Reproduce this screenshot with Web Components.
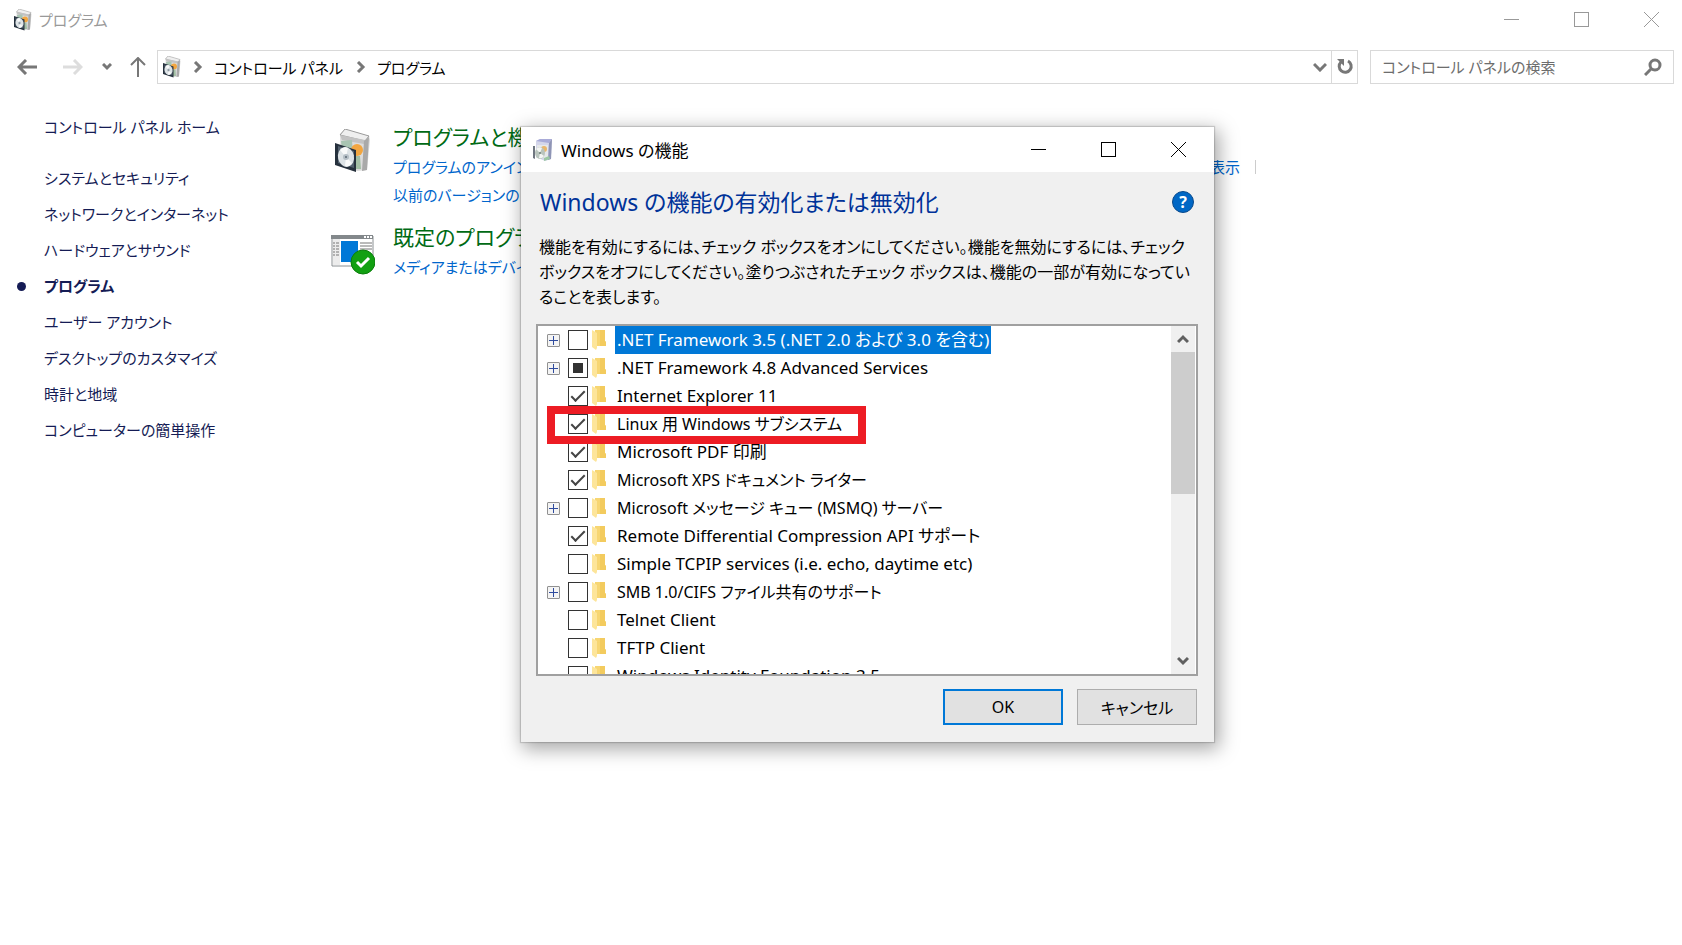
<!DOCTYPE html>
<html lang="ja">
<head>
<meta charset="utf-8">
<title>プログラム</title>
<style>
  body {
    margin: 0;
    background: #fff;
    color: #000;
    font-family: "Noto Sans", "Noto Sans CJK JP", sans-serif;
    font-size: 15px;
    font-feature-settings: "palt";
  }
</style>
</head>
<body>
<control-panel></control-panel>

<script>
const programIcon = `
  <svg viewBox="0 0 36 44" width="100%" height="100%">
    <path d="M5 5 10 0 34 7 35 11 32 41 22 42 6 36z" fill="#dcdcdc"/>
    <path d="M5 6 10 0 34 7 30 12z" fill="#efefef" stroke="#9b9b9b"/>
    <path d="M5 6 7 11 29 15 30 11z" fill="#c2c2c2"/>
    <path d="M29 12 34 8 32 41 27 42z" fill="#a9a9a9"/>
    <path d="M6 12 17 11 18 28 8 30z" fill="#a8c4b2"/>
    <circle cx="22" cy="21" r="6" fill="#f2a640"/>
    <path d="M20 27 25 27 26 40 20 40z" fill="#a3bfa5"/>
    <path d="M0 14 21 21V43L0 36z" fill="#26313d"/>
    <path d="M3 17 19 22V39L3 34z" fill="#53616f"/>
    <ellipse cx="11" cy="28" rx="8" ry="10" fill="#dde3e6" transform="rotate(-12 11 28)"/>
    <path d="M11 28 5 21Q8 17 13 19zM11 28 17 34Q15 38 10 37z" fill="#f9fafa"/>
    <circle cx="11" cy="28" r="3" fill="#b4bec5"/>
    <circle cx="11" cy="28" r="1" fill="#5d6a74"/>
  </svg>`;

const defaultsIcon = `
  <svg viewBox="0 0 44 40" width="100%" height="100%">
    <path d="M1 1H42V31H1z" fill="#fff" stroke="#8a8f92" stroke-width="1"/>
    <path d="M0 0H42V4H0z" fill="#83888b"/>
    <path d="M33 1h2v2h-2zM36 1h2v2h-2zM39 1h2v2h-2z" fill="#fff"/>
    <path d="M2 4H9V30H2z" fill="#ececec"/>
    <path d="M2 8h2m1 0h3M2 11h2m1 0h3M2 14h2m1 0h3M2 17h2m1 0h3M2 20h2m1 0h3M29 8H41M29 11H41M29 14H41" stroke="#777" stroke-width="1"/>
    <path d="M10 6H27V27H10z" fill="#0078d7"/>
    <circle cx="32" cy="27" r="12" fill="#12a012" stroke="#0b7d0b"/>
    <path d="M26 27 30 31 38 23" fill="none" stroke="#fff" stroke-width="3"/>
  </svg>`;

const featuresIcon = `
  <svg viewBox="0 0 22 24" width="100%" height="100%">
    <path d="M4 3 8 1H20L19 21 13 23 4 19z" fill="#d4d6ea"/>
    <path d="M4 3 8 1H20L17 5z" fill="#a9abd8"/>
    <path d="M17 5 20 1 19 21 16 22z" fill="#8f95b5"/>
    <path d="M5 7H16V20H5z" fill="#e6e8ea"/>
    <circle cx="12" cy="11" r="3" fill="#eab66b"/>
    <path d="M1 8 3 8 3 21 1 20z" fill="#6f7680"/>
    <ellipse cx="8" cy="15" rx="5" ry="6" fill="#b9c4bd"/>
    <path d="M8 15 4 11Q7 8 10 10zM8 15 12 18Q10 21 7 20z" fill="#f4f6f4"/>
    <circle cx="8" cy="15" r="1" fill="#6b7c74"/>
    <path d="M12 20 17 18 18 21 12 23z" fill="#9cc8a4"/>
  </svg>`;

// Minimize, maximize and close buttons
class CaptionButtons extends HTMLElement {
  constructor() {
    super();
    this.attachShadow({ mode: 'open' });
    this.shadowRoot.innerHTML = `
      <style>
        :host { display: flex; align-self: stretch; }
        button {
          display: flex;
          align-items: center;
          justify-content: center;
          width: 70px;
          padding: 0;
          border: 0;
          background: none;
          color: inherit;
        }
        svg { fill: none; stroke: currentColor; shape-rendering: crispEdges; }
        .x { shape-rendering: auto; }
      </style>
      <button aria-label="最小化"><svg width="15" height="15"><path d="M0 7.5H15"/></svg></button>
      <button aria-label="最大化"><svg width="15" height="15"><path d="M.5 .5H14.5V14.5H.5z"/></svg></button>
      <button aria-label="閉じる"><svg class="x" width="15" height="15"><path d="M0 0 15 15M15 0 0 15"/></svg></button>
    `;
  }
}
customElements.define('caption-buttons', CaptionButtons);

class AddressBar extends HTMLElement {
  constructor() {
    super();
    this.attachShadow({ mode: 'open' });
    this.shadowRoot.innerHTML = `
      <style>
        :host { display: flex; align-items: center; height: 34px; padding: 0 8px 0 15px; }
        button {
          display: flex;
          align-items: center;
          justify-content: center;
          flex: none;
          height: 32px;
          padding: 0;
          border: 0;
          background: none;
        }
        svg { fill: none; stroke: #777; stroke-width: 2; }
        .back, .forward { width: 24px; margin-right: 22px; }
        .forward { margin-right: 14px; }
        .recent { width: 16px; margin-right: 13px; }
        .up { width: 20px; margin-right: 9px; }
        .forward svg { stroke: #ddd; }
        .path, .search {
          box-sizing: border-box;
          display: flex;
          align-items: center;
          height: 34px;
          border: 1px solid #d9d9d9;
        }
        .path { flex: 1; margin-right: 12px; }
        .icon { width: 18px; height: 22px; margin: 0 12px 0 5px; }
        .icon svg { stroke: none; stroke-width: 1; }
        .crumb { color: #000; text-decoration: none; margin: 0 13px 0 11px; }
        .drop { width: 22px; margin-left: auto; }
        .refresh { width: 26px; border-left: 1px solid #d9d9d9; }
        .search { width: 304px; }
        input {
          flex: 1;
          min-width: 0;
          padding: 0 0 0 11px;
          border: 0;
          outline: 0;
          background: none;
          font: inherit;
          font-feature-settings: inherit;
        }
        input::placeholder { color: #6d6d6d; opacity: 1; }
        .find { width: 40px; }
      </style>
      <button class="back" aria-label="戻る"><svg width="20" height="16"><path d="M9 1 2 8 9 15M2 8H20" stroke-width="3"/></svg></button>
      <button class="forward" aria-label="進む"><svg width="20" height="16"><path d="M11 1 18 8 11 15M18 8H0" stroke-width="3"/></svg></button>
      <button class="recent" aria-label="最近表示した場所"><svg width="10" height="8"><path d="M1 1 5 5 9 1" stroke-width="3"/></svg></button>
      <button class="up" aria-label="上へ"><svg width="16" height="20"><path d="M1 8 8 1 15 8M8 1V20"/></svg></button>
      <div class="path">
        <span class="icon">${programIcon}</span>
        <svg width="10" height="12"><path d="M2 1 7 6 2 11" stroke-width="3"/></svg>
        <a class="crumb" href="#">コントロール パネル</a>
        <svg width="10" height="12"><path d="M2 1 7 6 2 11" stroke-width="3"/></svg>
        <a class="crumb" href="#">プログラム</a>
        <button class="drop" aria-label="以前の場所"><svg width="14" height="10"><path d="M1 2 7 8 13 2" stroke-width="3"/></svg></button>
        <button class="refresh" aria-label="最新の情報に更新">
          <svg width="18" height="18"><path d="M12 3A6 6 0 1 1 5 4" stroke-width="3"/><path d="M1 1H8V8z" fill="#777" stroke="none"/></svg>
        </button>
      </div>
      <div class="search">
        <input type="text" aria-label="コントロール パネルの検索" placeholder="コントロール パネルの検索">
        <button class="find" aria-label="検索"><svg width="18" height="18"><circle cx="11" cy="7" r="5" stroke-width="3"/><path d="M8 10 1 17" stroke-width="3"/></svg></button>
      </div>
    `;
  }
}
customElements.define('address-bar', AddressBar);

class SideNav extends HTMLElement {
  constructor() {
    super();
    this.attachShadow({ mode: 'open' });
    const items = [
      'システムとセキュリティ',
      'ネットワークとインターネット',
      'ハードウェアとサウンド',
      'プログラム',
      'ユーザー アカウント',
      'デスクトップのカスタマイズ',
      '時計と地域',
      'コンピューターの簡単操作',
    ];
    this.shadowRoot.innerHTML = `
      <style>
        :host { display: block; line-height: 36px; }
        a { color: #151c55; text-decoration: none; }
        .home { display: block; margin: 0 0 15px 44px; }
        ul { margin: 0; padding: 0; list-style: none; }
        li { display: flex; align-items: center; padding-left: 44px; }
        .current { padding-left: 17px; gap: 18px; font-weight: 600; }
        .current::before {
          content: "";
          width: 9px;
          height: 9px;
          border-radius: 50%;
          background: #151c55;
        }
      </style>
      <a class="home" href="#">コントロール パネル ホーム</a>
      <ul>
        ${items.map(item => `<li class="${item === 'プログラム' ? 'current' : ''}"><a href="#">${item}</a></li>`).join('')}
      </ul>
    `;
  }
}
customElements.define('side-nav', SideNav);

// A category: icon, green heading and its task links (slotted)
class PanelCategory extends HTMLElement {
  constructor() {
    super();
    this.attachShadow({ mode: 'open' });
  }

  connectedCallback() {
    const icon = this.getAttribute('icon') === 'defaults' ? defaultsIcon : programIcon;
    this.shadowRoot.innerHTML = `
      <style>
        :host { display: flex; gap: 18px; }
        .icon { flex: none; display: flex; justify-content: center; width: 44px; height: 44px; margin-top: 8px; }
        :host([icon]) .icon { margin-top: 12px; }
        .body { flex: 1; }
        h2 { margin: 0; font-size: 21px; font-weight: 400; line-height: 32px; }
        h2 a { color: #006a14; text-decoration: none; }
      </style>
      <span class="icon">${icon}</span>
      <div class="body">
        <h2><a href="#">${this.getAttribute('heading')}</a></h2>
        <slot></slot>
      </div>
    `;
  }
}
customElements.define('panel-category', PanelCategory);

class FeatureItem extends HTMLElement {
  constructor() {
    super();
    this.attachShadow({ mode: 'open' });
  }

  connectedCallback() {
    this.shadowRoot.innerHTML = `
      <style>
        :host { position: relative; display: flex; align-items: center; height: 28px; padding-left: 9px; font-size: 17px; }
        :host([kana]) { font-size: 16px; }
        .toggle {
          flex: none;
          display: flex;
          width: 13px;
          height: 13px;
          padding: 0;
          border: 1px solid #919191;
          border-radius: 1px;
          background: #f4f4f4;
        }
        .toggle svg { stroke: #2f4b9e; }
        .none { visibility: hidden; }
        input {
          flex: none;
          appearance: none;
          display: grid;
          place-items: center;
          width: 20px;
          height: 20px;
          margin: 0 4px 0 8px;
          border: 1px solid #333;
          background: #fff;
        }
        input:checked::before {
          content: "";
          width: 12px;
          height: 5px;
          margin-top: -4px;
          border-left: 2px solid #444;
          border-bottom: 2px solid #444;
          transform: rotate(-45deg);
        }
        input:indeterminate::before {
          content: "";
          width: 10px;
          height: 10px;
          background: #333;
        }
        .folder { flex: none; margin-right: 9px; }
        label { padding: 0 2px; line-height: 28px; white-space: nowrap; }
        :host([selected]) label { background: #0078d7; color: #fff; }
        :host([marked])::after {
          content: "";
          position: absolute;
          z-index: 1;
          left: 9px;
          top: -4px;
          box-sizing: border-box;
          width: 319px;
          height: 38px;
          border: 8px solid #ed1c24;
        }
      </style>
      <button class="toggle ${this.hasAttribute('branch') ? '' : 'none'}" aria-label="展開"><svg width="11" height="11"><path d="M1 5.5H10M5.5 1V10"/></svg></button>
      <input type="checkbox" id="box" ${this.hasAttribute('checked') ? 'checked' : ''}>
      <svg class="folder" width="14" height="22" viewBox="0 0 14 22">
        <path d="M3 1H13V12L14 13V17H3z" fill="#f7d673"/>
        <path d="M8 1H13V12L14 13V17H8z" fill="#f3cb5e"/>
        <path d="M0 1 5 4V19L4 21 0 18z" fill="#fde59a"/>
      </svg>
      <label for="box"><slot></slot></label>
    `;
    this.shadowRoot.querySelector('input').indeterminate = this.hasAttribute('partial');
  }
}
customElements.define('feature-item', FeatureItem);

class FeatureList extends HTMLElement {
  constructor() {
    super();
    this.attachShadow({ mode: 'open' });
    this.shadowRoot.innerHTML = `
      <style>
        :host { display: flex; height: 348px; border: 2px solid #a0a0a0; background: #fff; }
        .items { flex: 1; overflow: hidden; }
        .bar { display: flex; flex-direction: column; width: 24px; margin-right: 1px; background: #f0f0f0; }
        .bar button {
          display: flex;
          align-items: center;
          justify-content: center;
          height: 26px;
          padding: 0;
          border: 0;
          background: none;
        }
        svg { fill: none; stroke: #606060; stroke-width: 3; }
        .thumb { height: 142px; margin-bottom: auto; background: #cdcdcd; }
      </style>
      <div class="items"><slot></slot></div>
      <div class="bar">
        <button aria-label="上へスクロール"><svg width="12" height="10"><path d="M1 8 6 3 11 8"/></svg></button>
        <div class="thumb"></div>
        <button aria-label="下へスクロール"><svg width="12" height="10"><path d="M1 2 6 7 11 2"/></svg></button>
      </div>
    `;
  }
}
customElements.define('feature-list', FeatureList);

class FeaturesDialog extends HTMLElement {
  constructor() {
    super();
    this.attachShadow({ mode: 'open' });
    this.shadowRoot.innerHTML = `
      <style>
        :host {
          display: block;
          width: 693px;
          background: #f0f0f0;
          box-shadow: 0 0 1px 1px rgba(0,0,0,0.15), 3px 5px 18px 2px rgba(0,0,0,0.35);
          font-size: 16px;
        }
        header { display: flex; align-items: center; height: 45px; padding: 0 1px 0 11px; background: #fff; }
        .icon { width: 22px; height: 24px; margin-right: 7px; }
        .title { font-size: 17px; }
        caption-buttons { margin-left: auto; }
        main { padding: 13px 16px 17px 15px; }
        .top { display: flex; align-items: center; justify-content: space-between; padding: 0 4px; }
        h1 { margin: 0; font-size: 23px; font-weight: 400; line-height: 34px; color: #039; }
        .help {
          width: 22px;
          height: 22px;
          padding: 0;
          border: 1px solid #0a4a8c;
          border-radius: 50%;
          background: #0067c5;
          color: #fff;
          font: bold 16px/20px "Noto Sans", sans-serif;
        }
        p { margin: 16px 0 14px 3px; line-height: 25px; white-space: nowrap; }
        footer { display: flex; justify-content: flex-end; gap: 14px; margin-top: 13px; padding-right: 1px; }
        footer button {
          width: 120px;
          height: 36px;
          padding: 0;
          border: 1px solid #adadad;
          background: #e1e1e1;
          color: #000;
          font: inherit;
          font-feature-settings: inherit;
        }
        footer .ok { border: 2px solid #0078d7; }
      </style>
      <header>
        <span class="icon">${featuresIcon}</span>
        <span class="title">Windows の機能</span>
        <caption-buttons></caption-buttons>
      </header>
      <main>
        <div class="top">
          <h1>Windows の機能の有効化または無効化</h1>
          <button class="help">?</button>
        </div>
        <p>機能を有効にするには、チェック ボックスをオンにしてください。機能を無効にするには、チェック<br>ボックスをオフにしてください。塗りつぶされたチェック ボックスは、機能の一部が有効になってい<br>ることを表します。</p>
        <feature-list>
          <feature-item branch selected>.NET Framework 3.5 (.NET 2.0 および 3.0 を含む)</feature-item>
          <feature-item branch partial>.NET Framework 4.8 Advanced Services</feature-item>
          <feature-item checked>Internet Explorer 11</feature-item>
          <feature-item checked marked kana>Linux 用 Windows サブシステム</feature-item>
          <feature-item checked>Microsoft PDF 印刷</feature-item>
          <feature-item checked kana>Microsoft XPS ドキュメント ライター</feature-item>
          <feature-item branch kana>Microsoft メッセージ キュー (MSMQ) サーバー</feature-item>
          <feature-item checked>Remote Differential Compression API サポート</feature-item>
          <feature-item>Simple TCPIP services (i.e. echo, daytime etc)</feature-item>
          <feature-item branch kana>SMB 1.0/CIFS ファイル共有のサポート</feature-item>
          <feature-item>Telnet Client</feature-item>
          <feature-item>TFTP Client</feature-item>
          <feature-item>Windows Identity Foundation 3.5</feature-item>
        </feature-list>
        <footer>
          <button class="ok">OK</button>
          <button>キャンセル</button>
        </footer>
      </main>
    `;
  }
}
customElements.define('features-dialog', FeaturesDialog);

class ControlPanel extends HTMLElement {
  constructor() {
    super();
    this.attachShadow({ mode: 'open' });
    this.shadowRoot.innerHTML = `
      <style>
        :host { position: relative; display: block; min-height: 100vh; overflow: hidden; }
        .titlebar { display: flex; align-items: center; height: 39px; margin-bottom: 11px; padding-left: 14px; color: #999; }
        .titlebar .icon { width: 18px; height: 22px; margin-right: 7px; }
        caption-buttons { margin: 0 -4px 0 auto; }
        .content { display: flex; margin-top: 25px; }
        side-nav { width: 331px; }
        .categories { flex: 1; max-width: 925px; padding-top: 12px; }
        panel-category { margin-bottom: 12px; }
        .tasks { display: flex; justify-content: space-between; line-height: 28px; white-space: nowrap; }
        .tasks a { color: #06c; text-decoration: none; }
        .last { padding-right: 16px; background: linear-gradient(#ccc, #ccc) right center / 1px 14px no-repeat; }
        features-dialog { position: absolute; left: 521px; top: 127px; }
      </style>
      <div class="titlebar">
        <span class="icon">${programIcon}</span>
        <span>プログラム</span>
        <caption-buttons></caption-buttons>
      </div>
      <address-bar></address-bar>
      <div class="content">
        <side-nav></side-nav>
        <div class="categories">
          <panel-category heading="プログラムと機能">
            <div class="tasks"><a href="#">プログラムのアンインストール</a><span class="last"><a href="#">更新プログラムの表示</a></span></div>
            <div class="tasks"><a href="#">以前のバージョンの</a></div>
          </panel-category>
          <panel-category heading="既定のプログラム" icon="defaults">
            <div class="tasks"><a href="#">メディアまたはデバイス</a></div>
          </panel-category>
        </div>
      </div>
      <features-dialog></features-dialog>
    `;
  }
}
customElements.define('control-panel', ControlPanel);
</script>
</body>
</html>
